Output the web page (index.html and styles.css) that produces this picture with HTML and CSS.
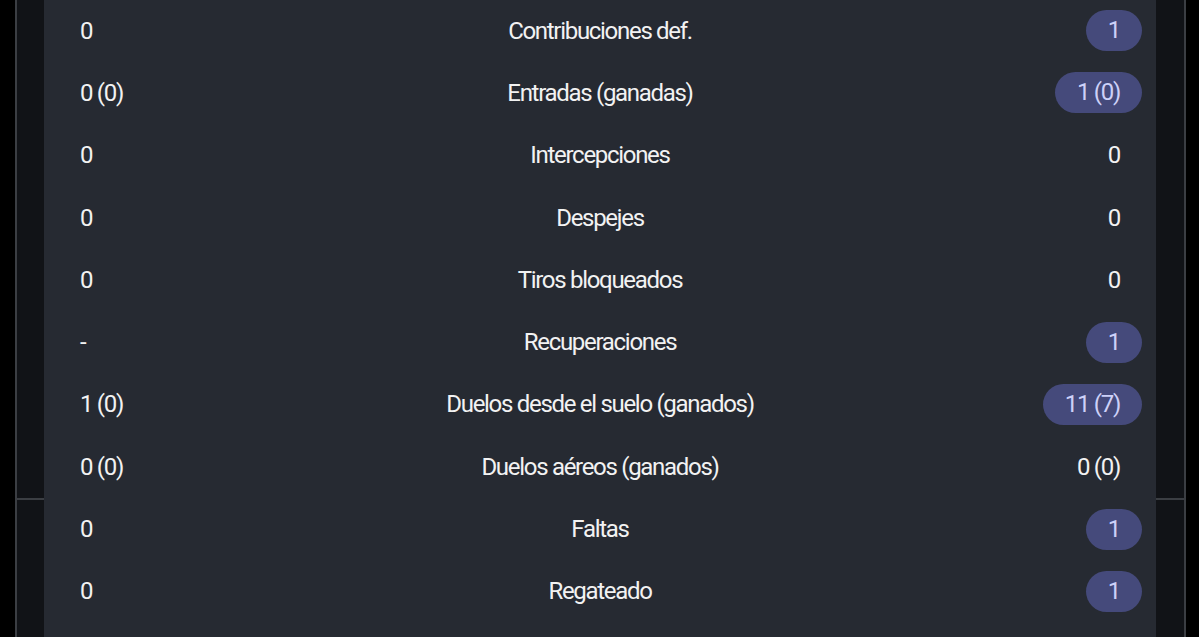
FILE: index.html
```html
<!DOCTYPE html>
<html lang="es">
<head>
  <meta charset="UTF-8">
  <title>Estadísticas defensivas</title>
  <meta name="viewport" content="width=device-width, initial-scale=1.0">
  <link rel="stylesheet" href="styles.css">
</head>
<body>
  <div class="frame">
    <div class="frame-top"></div>
    <div class="frame-bottom"></div>
  </div>
  <section class="stats">
    <div class="row"><span class="val">0</span><span class="label">Contribuciones def.</span><span class="val right"><span class="pill">1</span></span></div>
    <div class="row"><span class="val">0 (0)</span><span class="label">Entradas (ganadas)</span><span class="val right"><span class="pill">1 (0)</span></span></div>
    <div class="row"><span class="val">0</span><span class="label">Intercepciones</span><span class="val right">0</span></div>
    <div class="row"><span class="val">0</span><span class="label">Despejes</span><span class="val right">0</span></div>
    <div class="row"><span class="val">0</span><span class="label">Tiros bloqueados</span><span class="val right">0</span></div>
    <div class="row"><span class="val">-</span><span class="label">Recuperaciones</span><span class="val right"><span class="pill">1</span></span></div>
    <div class="row"><span class="val">1 (0)</span><span class="label">Duelos desde el suelo (ganados)</span><span class="val right"><span class="pill">11 (7)</span></span></div>
    <div class="row"><span class="val">0 (0)</span><span class="label">Duelos aéreos (ganados)</span><span class="val right">0 (0)</span></div>
    <div class="row"><span class="val">0</span><span class="label">Faltas</span><span class="val right"><span class="pill">1</span></span></div>
    <div class="row"><span class="val">0</span><span class="label">Regateado</span><span class="val right"><span class="pill">1</span></span></div>
  </section>
</body>
</html>
```

FILE: styles.css
```css
html, body { margin: 0; height: 100%; overflow: hidden; }
body { background: #000; font-family: Roboto, "Liberation Sans", sans-serif; color: #f2f2f2; position: relative; }

.frame { margin-left: 15px; width: 1171px; height: 100%; display: flex; flex-direction: column; }
.frame-top { height: 498px; background: #111317; border: 2px solid #3b3e43; border-top: none; }
.frame-bottom { flex: 1; background: #111317; border: 2px solid #3b3e43; border-top: none; border-bottom: none; }

.stats { position: absolute; top: -1px; left: 44px; width: 1112px; height: 660px; background: #262a32; padding: 0 14px; box-sizing: border-box; }
.row { height: 62.3px; display: grid; grid-template-columns: 1fr auto 1fr; align-items: center; font-size: 24px; letter-spacing: -1.3px; }
.row:first-child { margin-top: 0.5px; }
.val { padding: 0 22px; }
.val.right { text-align: right; }
.label { text-align: center; }
.pill { display: inline-block; background: #454a7b; color: #cdd1f8; border-radius: 21px; height: 41px; line-height: 41px; padding: 0 22px; margin-right: -22px; min-width: 12px; text-align: center; }
```
